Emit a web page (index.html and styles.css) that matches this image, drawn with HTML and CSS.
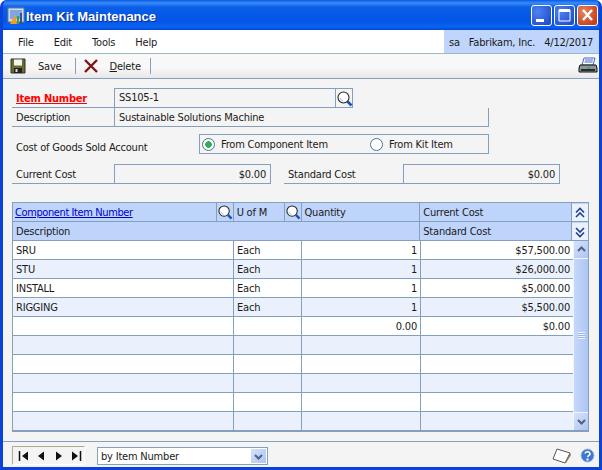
FILE: index.html
```html
<!DOCTYPE html>
<html lang="en">
<head>
<meta charset="utf-8">
<title>Item Kit Maintenance</title>
<link rel="stylesheet" href="styles.css">
</head>
<body>
<svg class="defs" width="0" height="0" aria-hidden="true">
  <symbol id="lens" viewBox="0 0 16 16">
    <circle cx="6.5" cy="6.5" r="5.5" fill="#fff" stroke="#222" stroke-width="1.1"/>
    <path d="M3 7a4 4 0 0 0 3 3" fill="none" stroke="#a9b6e6"/>
    <path d="M10.5 10.5l4 4" stroke="#1c4fb8" stroke-width="2.6"/>
  </symbol>
</svg>
<div class="window">
  <header class="titlebar">
    <svg class="app-icon" width="18" height="18" viewBox="0 0 18 18">
      <rect x="1" y="1" width="16" height="14" fill="#cfd9ea" stroke="#6d7c99"/>
      <rect x="3" y="3" width="12" height="9" fill="#7ea6e0"/>
      <path d="M3 17l5-9 2 9z" fill="#f0a020"/>
      <path d="M10 17V9h2v8z" fill="#3f9b3f"/>
      <path d="M13 17V6h2v11z" fill="#33508f"/>
    </svg>
    <span class="title">Item Kit Maintenance</span>
    <div class="win-btns">
      <span class="win-btn"><svg width="21" height="21" viewBox="0 0 21 21"><rect x="5" y="14" width="8" height="3" fill="#fff"/></svg></span>
      <span class="win-btn"><svg width="21" height="21" viewBox="0 0 21 21"><path d="M5 5h11v11H5z" fill="none" stroke="#fff"/><rect x="5" y="4" width="11" height="3" fill="#fff"/></svg></span>
      <span class="win-btn close"><svg width="21" height="21" viewBox="0 0 21 21"><path d="M6 5l9 10M15 5l-9 10" stroke="#fff" stroke-width="2.4"/></svg></span>
    </div>
  </header>

  <div class="menubar">
    <nav class="menus"><span>File</span><span>Edit</span><span>Tools</span><span>Help</span></nav>
    <div class="status"><span>sa</span><span>Fabrikam, Inc.</span><span>4/12/2017</span></div>
  </div>

  <div class="toolbar">
    <svg class="tool-icon" width="16" height="16" viewBox="0 0 16 16">
      <path d="M1 1h14v14H1z" fill="#6b6b2a" stroke="#333"/>
      <rect x="4" y="1.5" width="8" height="6" fill="#f4f4f0"/>
      <rect x="4" y="10" width="8" height="5" fill="#222"/>
      <rect x="5.5" y="11" width="2" height="3" fill="#ddd"/>
    </svg>
    <span class="tool-text save">Save</span>
    <span class="tool-sep"></span>
    <svg class="tool-icon" width="16" height="16" viewBox="0 0 16 16">
      <path d="M2 2l12 12M14 2L2 14" stroke="#7d1616" stroke-width="2.4"/>
    </svg>
    <span class="tool-text del"><u>D</u>elete</span>
    <span class="tool-sep"></span>
    <svg class="printer" width="20" height="18" viewBox="0 0 20 18">
      <path d="M6 1h11l-2 7H4z" fill="#fff" stroke="#3f68c0"/>
      <path d="M7 3h8M6.500 5h8" stroke="#3f68c0"/>
      <path d="M2 8h16l1 3v4H1v-4z" fill="#8d949b" stroke="#111"/>
      <rect x="3" y="12" width="14" height="2" fill="#2a2a2a"/>
      <rect x="9" y="10" width="3" height="1.500" fill="#2fb03f"/>
    </svg>
  </div>

  <main class="form">
    <div class="row first">
      <span class="label req">Item Number</span>
      <span class="field w-num">SS105-1</span>
      <span class="lookup"><svg width="16" height="16"><use href="#lens"/></svg></span>
    </div>
    <div class="row">
      <span class="label">Description</span>
      <span class="field w-desc">Sustainable Solutions Machine</span>
    </div>
    <div class="row cogs">
      <span class="plain">Cost of Goods Sold Account</span>
      <div class="radios">
        <span class="radio"><span class="dot on"></span>From Component Item</span>
        <span class="radio"><span class="dot"></span>From Kit Item</span>
      </div>
    </div>
    <div class="row costs">
      <span class="label">Current Cost</span>
      <span class="field amount w-cost">$0.00</span>
      <span class="label std">Standard Cost</span>
      <span class="field amount w-std">$0.00</span>
    </div>

    <section class="grid">
      <div class="head">
        <div class="hrow">
          <span class="h c1 link">Component Item Number</span>
          <span class="hicon"><svg width="15" height="15"><use href="#lens"/></svg></span>
          <span class="h c2">U of M</span>
          <span class="hicon"><svg width="15" height="15"><use href="#lens"/></svg></span>
          <span class="h c3">Quantity</span>
          <span class="h c4">Current Cost</span>
          <span class="chev"><svg width="12" height="12" viewBox="0 0 12 12"><path d="M2 5.500l4-4 4 4M2 10l4-4 4 4" fill="none" stroke="#23408f" stroke-width="1.600"/></svg></span>
        </div>
        <div class="hrow">
          <span class="h desc">Description</span>
          <span class="h c4">Standard Cost</span>
          <span class="chev"><svg width="12" height="12" viewBox="0 0 12 12"><path d="M2 2l4 4 4-4M2 6.500l4 4 4-4" fill="none" stroke="#23408f" stroke-width="1.600"/></svg></span>
        </div>
      </div>
      <div class="body">
        <div class="rows">
          <div class="tr"><span>SRU</span><span>Each</span><span class="num">1</span><span class="num">$57,500.00</span></div>
          <div class="tr"><span>STU</span><span>Each</span><span class="num">1</span><span class="num">$26,000.00</span></div>
          <div class="tr"><span>INSTALL</span><span>Each</span><span class="num">1</span><span class="num">$5,000.00</span></div>
          <div class="tr"><span>RIGGING</span><span>Each</span><span class="num">1</span><span class="num">$5,500.00</span></div>
          <div class="tr"><span></span><span></span><span class="num">0.00</span><span class="num">$0.00</span></div>
          <div class="tr"><span></span><span></span><span></span><span></span></div>
          <div class="tr"><span></span><span></span><span></span><span></span></div>
          <div class="tr"><span></span><span></span><span></span><span></span></div>
          <div class="tr"><span></span><span></span><span></span><span></span></div>
          <div class="tr"><span></span><span></span><span></span><span></span></div>
        </div>
        <div class="scroll">
          <span class="sbtn"><svg width="11" height="11" viewBox="0 0 11 11"><path d="M2 7l3.500-3.500L9 7" fill="none" stroke="#4d6185" stroke-width="2"/></svg></span>
          <span class="thumb"><span class="grip"></span></span>
          <span class="sbtn"><svg width="11" height="11" viewBox="0 0 11 11"><path d="M2 4l3.500 3.500L9 4" fill="none" stroke="#4d6185" stroke-width="2"/></svg></span>
        </div>
      </div>
    </section>
  </main>

  <footer class="footer">
    <div class="nav">
      <svg width="12" height="12" viewBox="0 0 12 12"><path d="M1.500 1v10" stroke="#111" stroke-width="1.500"/><path d="M10 1.500v9L4 6z" fill="#111"/></svg>
      <svg width="12" height="12" viewBox="0 0 12 12"><path d="M9 1.500v9L3 6z" fill="#111"/></svg>
      <svg width="12" height="12" viewBox="0 0 12 12"><path d="M3 1.500v9L9 6z" fill="#111"/></svg>
      <svg width="12" height="12" viewBox="0 0 12 12"><path d="M10.500 1v10" stroke="#111" stroke-width="1.500"/><path d="M2 1.500v9L8 6z" fill="#111"/></svg>
    </div>
    <div class="select">
      <span class="sel-text">by Item Number</span>
      <span class="sel-btn"><svg width="11" height="11" viewBox="0 0 11 11"><path d="M2 4l3.500 3.500L9 4" fill="none" stroke="#4d6185" stroke-width="2"/></svg></span>
    </div>
    <svg class="note" width="20" height="16" viewBox="0 0 20 16">
      <path d="M5 1l13 4-5 10-12-4z" fill="#fff" stroke="#555"/>
      <path d="M18 5l-5 10 1 0 5-8z" fill="#8a7a50"/>
    </svg>
    <svg class="help" width="15" height="15" viewBox="0 0 15 15">
      <circle cx="7.500" cy="7.500" r="6.500" fill="#3f78cf" stroke="#9cbbe8"/>
      <path d="M5 5.500a2.500 2 0 1 1 3.500 2L7.500 9" fill="none" stroke="#fff" stroke-width="1.500"/>
      <rect x="6.500" y="10.500" width="2" height="2" fill="#fff"/>
    </svg>
  </footer>
</div>
</body>
</html>
```
FILE: styles.css
```css
* { box-sizing: border-box; }
html, body { margin: 0; padding: 0; background: #fff; }
body { width: 602px; height: 470px; overflow: hidden; font: 11px/1 "DejaVu Sans Condensed", "DejaVu Sans", sans-serif; font-stretch: condensed; letter-spacing: -0.2px; color: #1a1a1a; }
.defs { display: block; height: 0; }

.window { width: 602px; height: 470px; display: flex; flex-direction: column; background: #0a3fd8; border-radius: 7px 7px 0 0; border: solid #0b43d8; border-width: 0 3px 3px 3px; overflow: hidden; }

.titlebar { flex: none; height: 30px; margin: 0 -3px; padding: 2px 4px 0 7px; display: flex; align-items: center; background: linear-gradient(#0a5ae6 0, #3a8cf8 3px, #0a5fe8 7px, #0355e6 20px, #0a62f0 27px, #0346d8 30px); }
.app-icon { flex: none; }
.title { margin-left: 1px; color: #fff; font: bold 13px/1 "Liberation Sans", sans-serif; letter-spacing: 0; text-shadow: 1px 1px 0 #0a2a90; }
.win-btns { margin-left: auto; display: flex; gap: 2px; margin-top: -1px; }
.win-btn { width: 21px; height: 21px; display: block; border: 1px solid #fff; border-radius: 3px; background: radial-gradient(circle at 30% 30%, #4f83ef, #2350d2 80%); }
.win-btn svg { display: block; margin: -1px; }
.win-btn.close { background: radial-gradient(circle at 30% 30%, #e8835f, #c8401c 80%); }

.menubar { flex: none; height: 23px; display: flex; background: #fff; }
.menus { flex: 1; display: flex; padding: 7px 0 0 15px; gap: 20px; }
.status { width: 155px; display: flex; gap: 9px; padding: 7px 0 0 5px; background: #c0d5fb; white-space: nowrap; }

.toolbar { flex: none; height: 26px; display: flex; align-items: center; padding-left: 7px; background: linear-gradient(#f8f8f8 55%, #e8e8e8); border-bottom: 1px solid #84a0bc; border-top: 1px solid #9bb; }
.tool-icon { flex: none; }
.tool-text { margin-left: 12px; }
.tool-sep { width: 1px; height: 16px; margin-left: 13px; margin-right: 7px; background: #84a0bc; }
.del { margin-left: 11px; }
.del + .tool-sep { margin-left: 9px; }
.printer { margin-left: auto; margin-right: 1px; }

.form { flex: 1; padding: 9px 0 0 9px; background: #f4f4f4; border-bottom: 1px solid #84a0bc; }
.row { display: flex; height: 19px; }
.row.first { height: 20px; }
.label { width: 102px; padding: 4px 0 0 4px; border-bottom: 1px solid #84a0bc; white-space: nowrap; }
.label.req { padding-top: 5px; color: #f00; font-weight: bold; text-decoration: underline; }
.field { height: 100%; padding: 3px 0 0 4px; border: solid #84a0bc; border-width: 0 0 1px 1px; white-space: nowrap; }
.w-num { width: 221px; border-top: 1px solid #84a0bc; }
.w-desc { width: 375px; padding-top: 4px; border-width: 0 1px 1px 1px; }
.lookup { width: 18px; border: 1px solid #84a0bc; padding: 2px 0 0 1px; }
.lookup svg { display: block; }
.cogs { margin-top: 7px; height: 20px; }
.plain { width: 187px; padding: 8px 0 0 4px; white-space: nowrap; }
.radios { width: 290px; display: flex; border: 1px solid #84a0bc; padding: 3px 0 0 2px; }
.radio { flex: none; display: flex; width: 168px; gap: 6px; padding-top: 1px; white-space: nowrap; }
.dot { width: 13px; height: 13px; margin-top: -1px; border-radius: 50%; border: 1.5px solid #4f7298; background: #fff; display: block; }
.dot.on { background: radial-gradient(circle, #29b14a 0 3px, #fff 3.5px); }
.costs { margin-top: 10px; height: 20px; }
.costs .label { padding-top: 5px; }
.field.amount { text-align: right; padding: 4px 4px 0 0; border-width: 1px; }
.w-cost { width: 157px; }
.label.std { width: 119px; margin-left: 13px; padding-left: 4px; }
.w-std { width: 157px; }

.grid { width: 577px; margin-top: 18px; border: solid #84a0bc; border-width: 1px 1px 2px 1px; }
.head { background: #bfd4fa; }
.hrow { display: flex; height: 19px; border-bottom: 1px solid #84a0bc; }
.h { padding: 4px 0 0 3px; white-space: nowrap; border-right: 1px solid #84a0bc; }
.c1 { width: 204px; border-right: 1px solid #84a0bc; }
.link { padding-left: 2px; color: #00c; letter-spacing: -0.4px; text-decoration: underline; }
.hicon { width: 17px; border-right: 1px solid #84a0bc; padding: 2px 0 0 1px; }
.hicon svg { display: block; }
.c2 { width: 51px; }
.c3 { width: 119px; }
.c4 { width: 152px; }
.desc { width: 408px; }
.chev { width: 16px; display: flex; align-items: center; justify-content: center; margin-top: 1px; background: #eaf1fd; }
.body { display: flex; }
.rows { width: 560px; }
.tr { display: grid; grid-template-columns: 221px 68px 119px 152px; height: 19px; background: #fff; border-bottom: 1px solid #84a0bc; }
.tr:nth-child(even) { background: #eaf1fd; }
.tr:last-child { border-bottom: 0; height: 18px; }
.tr span { padding: 4px 2px 0 3px; border-right: 1px solid #84a0bc; white-space: nowrap; }
.tr span:last-child { border-right: 0; }
.tr .num { text-align: right; padding-right: 3px; }
.scroll { flex: 1; display: flex; flex-direction: column; padding-left: 1px; background: #f0f4fc; }
.sbtn { height: 17px; display: flex; align-items: center; justify-content: center; background: linear-gradient(135deg, #d5e2fa, #aec4f2); }
.thumb { flex: 1; margin: 1px 0; display: flex; align-items: center; justify-content: center; background: linear-gradient(90deg, #c6d8fb, #aec5f3); }
.grip { width: 7px; height: 7px; background: repeating-linear-gradient(#eef3fd 0 1px, #9db5e3 1px 2px); }

.footer { flex: none; height: 25px; display: flex; align-items: flex-start; padding: 4px 4px 0 9px; background: #f4f4f4; }
.nav { width: 73px; height: 19px; display: flex; align-items: center; justify-content: space-between; padding: 0 2px 0 5px; border: 1px solid; border-color: #b0a990 #fff #fff #b0a990; }
.select { width: 171px; height: 18px; margin: 1px 0 0 12px; display: flex; background: #fff; border: 1px solid #84a0bc; }
.sel-text { flex: 1; padding: 3px 0 0 3px; }
.sel-btn { width: 15px; margin: 1px; display: flex; align-items: center; justify-content: center; background: linear-gradient(135deg, #d5e2fa, #aec4f2); }
.note { margin-left: auto; margin-top: 2px; }
.help { margin-left: 8px; margin-top: 2px; }
```
